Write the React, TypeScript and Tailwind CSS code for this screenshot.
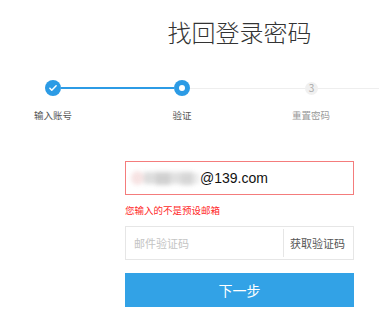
export default function App() {
  const font = { fontFamily: '"Noto Sans CJK SC", "Liberation Sans", sans-serif' };

  return (
    <div className="w-[379px] h-[318px] bg-white overflow-hidden" style={font}>
      {/* 标题 */}
      <div className="pt-[13px] ml-[125px] w-[229px] text-center">
        <h1 className="text-[24px] leading-[38px] font-light text-[#333]">找回登录密码</h1>
      </div>

      {/* 步骤条 */}
      <div className="mt-[29px] flex items-center h-[16px]">
        <div className="w-[45px] shrink-0" />
        <div className="w-[16px] h-[16px] rounded-full bg-[#2c9be5] flex items-center justify-center shrink-0">
          <svg viewBox="0 0 16 16" className="w-[10px] h-[10px]" fill="none" stroke="white" strokeWidth={2.4} strokeLinecap="round" strokeLinejoin="round">
            <path d="M3 8.5l3 3 7-7" />
          </svg>
        </div>
        <div className="w-[113px] h-[2px] bg-[#2c9be5] shrink-0" />
        <div className="w-[16px] h-[16px] rounded-full bg-[#2c9be5] flex items-center justify-center shrink-0">
          <div className="w-[6px] h-[6px] rounded-full bg-white" />
        </div>
        <div className="w-[115px] h-[1px] bg-[#eeeeee] shrink-0" />
        <div className="w-[13px] h-[13px] rounded-full bg-[#f0f0f0] text-[#aaa] text-[10px] leading-none flex items-center justify-center shrink-0">3</div>
        <div className="flex-1 h-[1px] bg-[#eeeeee]" />
      </div>
      <div className="mt-[12px] ml-[13px] flex gap-[49px] text-[9.5px] leading-[14px]">
        <div className="w-[80px] text-center text-[#555]">输入账号</div>
        <div className="w-[80px] text-center text-[#555]">验证</div>
        <div className="w-[80px] text-center text-[#999]">重置密码</div>
      </div>

      {/* 表单 */}
      <div className="ml-[125px] w-[229px] mt-[39px] flex flex-col">
        <div className="h-[34px] border border-[#f47c7c] flex items-center pl-[5px]">
          <div className="flex items-center blur-[2px] opacity-70">
            <div className="w-[13px] h-[14px] rounded-full bg-[#f3d7d7]" />
            <div className="w-[12px] h-[12px] bg-[#cfcfcf]" />
            <div className="w-[14px] h-[13px] bg-[#bdbdbd]" />
            <div className="w-[11px] h-[12px] bg-[#d4d4d4]" />
            <div className="w-[12px] h-[13px] bg-[#c6c6c6]" />
            <div className="w-[6px] h-[11px] bg-[#e2e2e2]" />
          </div>
          <span className="ml-[1px] text-[14px] text-[#111]" style={{ fontFamily: '"Liberation Sans", sans-serif' }}>@139.com</span>
        </div>
        <div className="mt-[8px] text-[9.5px] leading-[14px] text-[#ff2a2a]">您输入的不是预设邮箱</div>
        <div className="mt-[9px] h-[34px] border border-[#e6e6e6] flex items-center">
          <span className="flex-1 pl-[8px] text-[11px] text-[#c4c4c4]">邮件验证码</span>
          <div className="w-[1px] h-[28px] bg-[#e6e6e6]" />
          <span className="pl-[6px] pr-[8px] text-[11px] text-[#555]">获取验证码</span>
        </div>
        <button className="mt-[13px] h-[34px] bg-[#32a2e6] text-white text-[14px] flex items-center justify-center">
          下一步
        </button>
      </div>
    </div>
  );
}
